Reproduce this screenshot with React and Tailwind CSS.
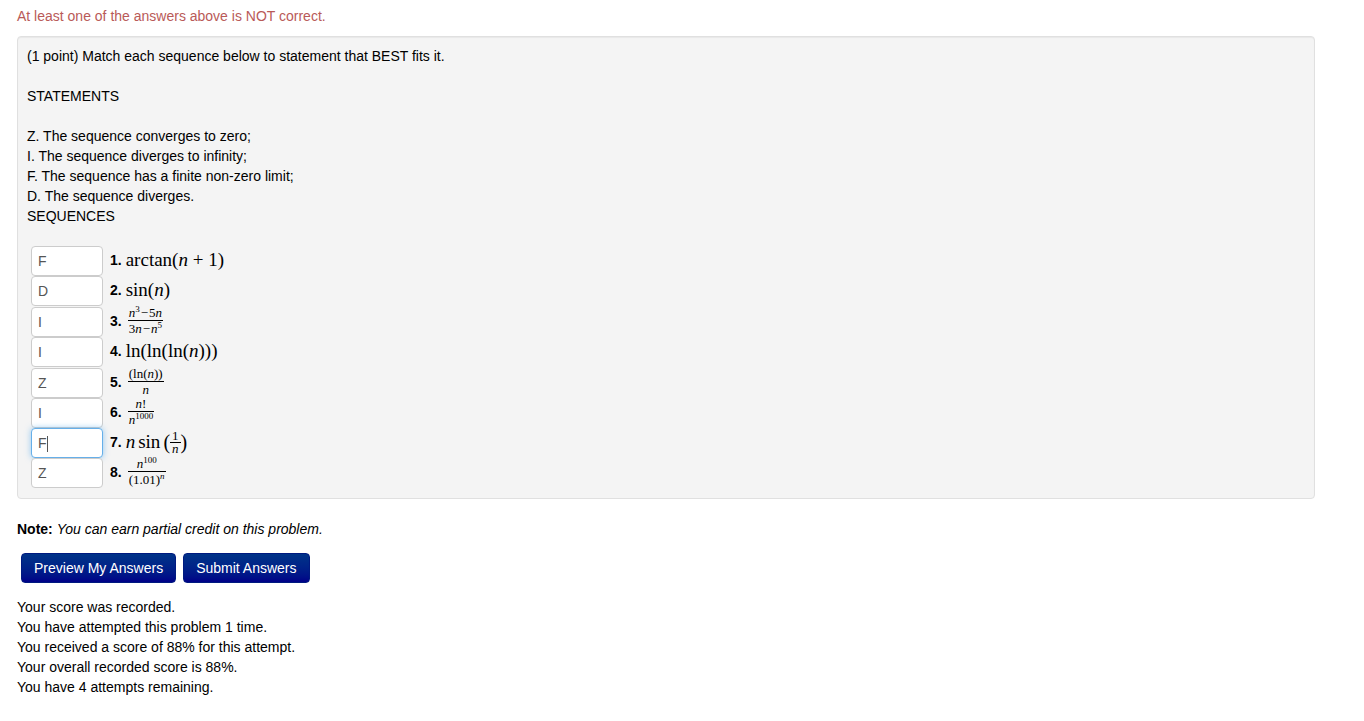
import React, { useState } from "react";

const statements = [
  "Z. The sequence converges to zero;",
  "I. The sequence diverges to infinity;",
  "F. The sequence has a finite non-zero limit;",
  "D. The sequence diverges.",
];

const results = [
  "Your score was recorded.",
  "You have attempted this problem 1 time.",
  "You received a score of 88% for this attempt.",
  "Your overall recorded score is 88%.",
  "You have 4 attempts remaining.",
];

const N = () => <i>n</i>;

const Minus = () => <span className="mx-px">−</span>;

const Sup = ({ children }) => (
  <sup className="text-[9px] leading-none top-[-5px]">{children}</sup>
);

const Frac = ({ top, bottom }) => (
  <span className="mx-0.5 inline-flex flex-col items-stretch text-center text-[13px] leading-[14px]">
    <span className="border-b border-black px-px">{top}</span>
    <span className="px-px pt-px">{bottom}</span>
  </span>
);

const sequences = [
  { answer: "F", math: <span>arctan(<N /> + 1)</span> },
  { answer: "D", math: <span>sin(<N />)</span> },
  { answer: "I", math: <Frac top={<><N /><Sup>3</Sup><Minus />5<N /></>} bottom={<>3<N /><Minus /><N /><Sup>5</Sup></>} /> },
  { answer: "I", math: <span>ln(ln(ln(<N />)))</span> },
  { answer: "Z", math: <Frac top={<>(ln(<N />))</>} bottom={<N />} /> },
  { answer: "I", math: <Frac top={<><N />!</>} bottom={<><N /><Sup>1000</Sup></>} /> },
  {
    answer: "F",
    active: true,
    math: (
      <span className="flex items-center">
        <span className="flex gap-[3px]"><N /><span>sin</span></span>
        <span className="ml-[3px] text-xl leading-6">(</span>
        <span className="inline-flex flex-col text-center text-[13px] leading-3">
          <span className="border-b border-black px-0.5">1</span>
          <span className="px-0.5"><N /></span>
        </span>
        <span className="text-xl leading-6">)</span>
      </span>
    ),
  },
  { answer: "Z", math: <Frac top={<><N /><Sup>100</Sup></>} bottom={<>(1.01)<Sup><N /></Sup></>} /> },
];

function AnswerRow({ number, answer, math, active }) {
  const [value, setValue] = useState(answer);
  const id = `answer-${number}`;
  return (
    <li className="flex h-[30px] items-center nth-3:mt-px nth-5:mt-px">
      <span className="relative flex">
        <input
          id={id}
          type="text"
          value={value}
          onChange={(e) => setValue(e.target.value)}
          className={
            active
              ? "h-[30px] w-[72px] rounded border border-[#66afe9] bg-white px-1.5 text-sm text-[#555] caret-transparent shadow-[0_0_6px_rgba(82,168,236,0.6)] outline-none"
              : "h-[30px] w-[72px] rounded border border-[#ccc] bg-white px-1.5 text-sm text-[#555] outline-none"
          }
        />
        {active && <span className="absolute top-2 left-4 h-4 w-px bg-[#555]" />}
      </span>
      <label htmlFor={id} className="ml-[7px] flex items-center gap-1 pb-0.5">
        <b>{number}.</b>
        <span className="flex items-center font-['Liberation_Serif',serif] text-[19px] leading-5">{math}</span>
      </label>
    </li>
  );
}

const buttonClass =
  "h-[30px] cursor-pointer rounded border border-[#001a80] bg-linear-to-b from-[#003388] to-[#000088] px-3 text-sm leading-5 text-white";

export default function App() {
  return (
    <main className="pt-1.5 pr-[49px] pl-[17px] font-['Liberation_Sans',Arial,sans-serif] text-sm leading-5 text-black">
      <p className="text-[#b95a58]">At least one of the answers above is NOT correct.</p>
      <section className="mt-2.5 rounded-sm border border-[#e0e0e0] bg-[#f4f4f4] px-[9px] pt-[9px] pb-2.5 shadow-[inset_0_1px_1px_rgba(0,0,0,0.05)]">
        <p>(1 point) Match each sequence below to statement that BEST fits it.</p>
        <h2 className="my-5">STATEMENTS</h2>
        <ul>
          {statements.map((s) => (
            <li key={s}>{s}</li>
          ))}
        </ul>
        <h2>SEQUENCES</h2>
        <ol className="mt-5 ml-1">
          {sequences.map((s, i) => (
            <AnswerRow key={i} number={i + 1} {...s} />
          ))}
        </ol>
      </section>
      <p className="mt-5">
        <b>Note:</b> <i>You can earn partial credit on this problem.</i>
      </p>
      <div className="mt-3.5 ml-1 flex gap-[7px]">
        <button type="button" className={buttonClass}>Preview My Answers</button>
        <button type="button" className={buttonClass}>Submit Answers</button>
      </div>
      <div className="mt-3.5">
        {results.map((r) => (
          <p key={r}>{r}</p>
        ))}
      </div>
    </main>
  );
}
